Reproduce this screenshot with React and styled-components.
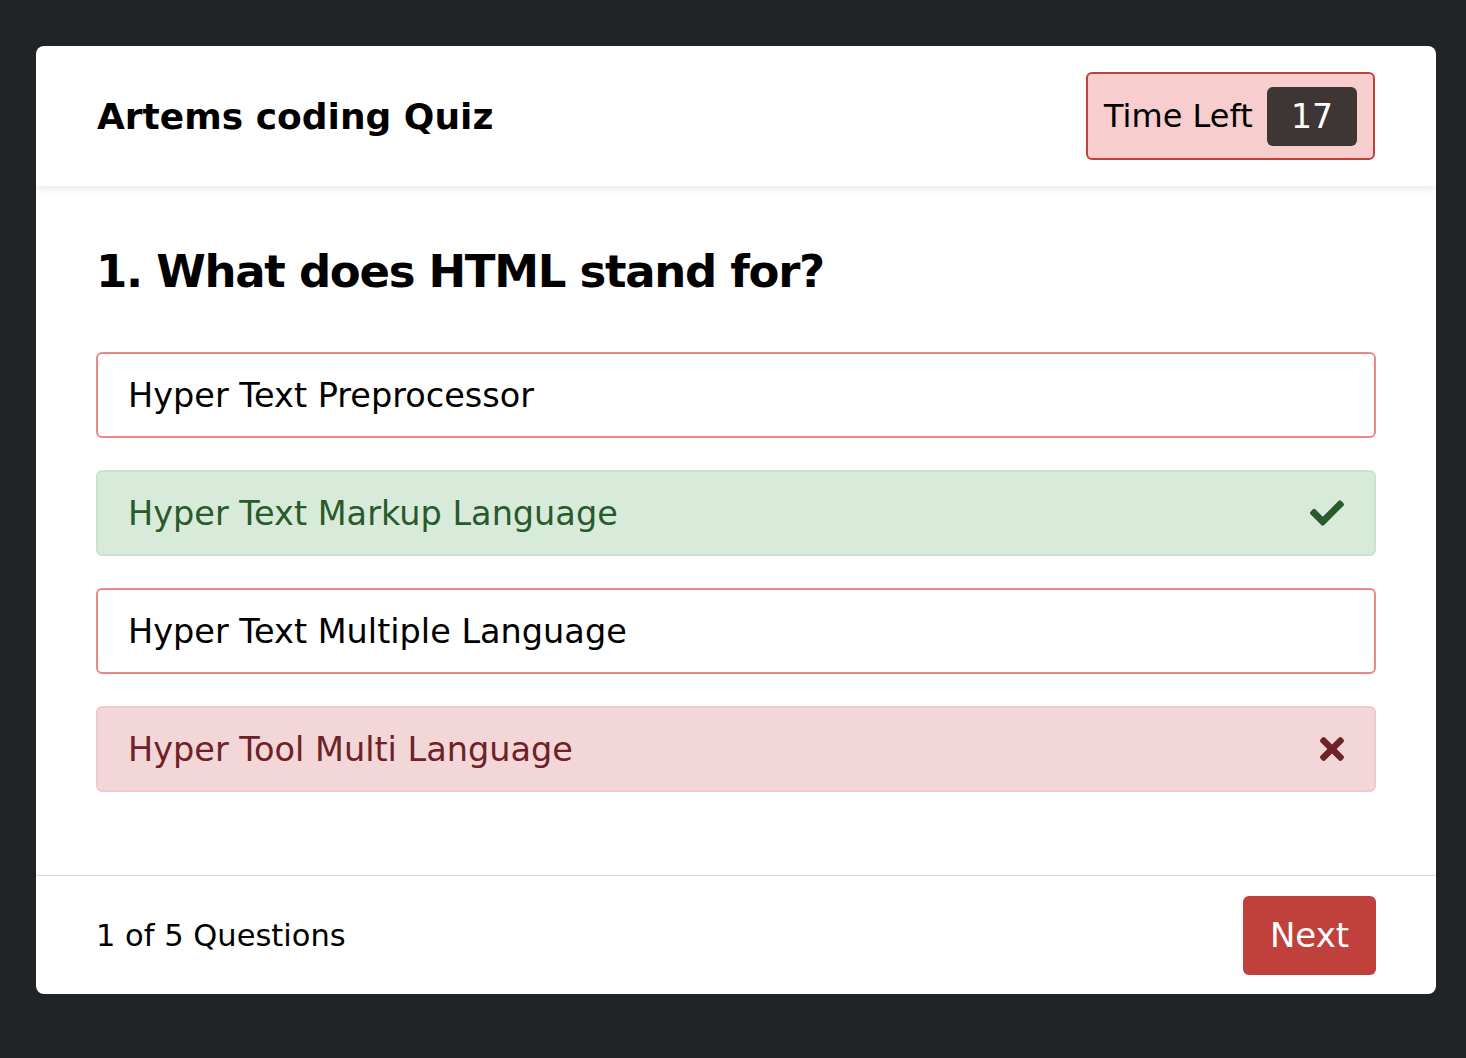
import styled, { createGlobalStyle } from 'styled-components'
import { FaCheck, FaTimes } from 'react-icons/fa'

const GlobalStyle = createGlobalStyle`
  * { box-sizing: border-box; }
  body {
    margin: 0;
    background: #212427;
    font-family: "DejaVu Sans", "Noto Sans", sans-serif;
  }
`;

const Page = styled.div`
  padding: 46px 30px 64px 36px;
`;

const Card = styled.div`
  background: #fff;
  border-radius: 8px;
  overflow: hidden;
`;

const Header = styled.header`
  height: 140px;
  padding: 0 61px;
  display: flex;
  align-items: center;
  justify-content: space-between;
  box-shadow: 0 4px 8px rgba(0, 0, 0, 0.08);
  position: relative;
`;

const Title = styled.h1`
  margin: 0;
  font-size: 36px;
  font-weight: 700;
  color: #000;
`;

const Timer = styled.div`
  height: 88px;
  width: 289px;
  display: flex;
  align-items: center;
  justify-content: space-between;
  padding: 0 16px 0 16px;
  background: #f7cdcd;
  border: 2px solid #c0413b;
  border-radius: 6px;
  font-size: 32px;
  color: #000;
`;

const TimerValue = styled.span`
  width: 90px;
  height: 59px;
  display: flex;
  align-items: center;
  justify-content: center;
  background: #3e3535;
  color: #fff;
  border-radius: 6px;
  font-size: 33px;
`;

const Body = styled.main`
  padding: 56px 60px 83px;
`;

const Question = styled.h2`
  margin: 0 0 50px;
  font-size: 45px;
  font-weight: 700;
  letter-spacing: -1.3px;
  line-height: 60px;
  color: #000;
`;

const Options = styled.div`
  display: flex;
  flex-direction: column;
  gap: 32px;
`;

const variants = {
  idle: { bg: '#fff', border: '#ee8886', color: '#000' },
  correct: { bg: '#d8ebdb', border: '#c9e4cd', color: '#295a2c' },
  wrong: { bg: '#f2d6d8', border: '#f0c9cc', color: '#6e2126' },
};

const Option = styled.button`
  height: 86px;
  width: 100%;
  display: flex;
  align-items: center;
  justify-content: space-between;
  padding: 0 30px 0 30px;
  background: ${({ $state }) => variants[$state].bg};
  border: 2px solid ${({ $state }) => variants[$state].border};
  color: ${({ $state }) => variants[$state].color};
  border-radius: 6px;
  font-family: inherit;
  font-size: 33.5px;
  text-align: left;
  cursor: pointer;
`;

const CheckIcon = styled(FaCheck)`
  width: 34px;
  height: 34px;
`;

const CrossIcon = styled(FaTimes)`
  width: 24px;
  height: 36px;
`;

const Footer = styled.footer`
  border-top: 1px solid #d6d6d6;
  height: 119px;
  padding: 0 60px 0 60px;
  display: flex;
  align-items: center;
  justify-content: space-between;
`;

const Count = styled.span`
  font-size: 30.5px;
  color: #000;
`;

const NextButton = styled.button`
  width: 133px;
  height: 79px;
  background: #c0413b;
  color: #fff;
  border: none;
  border-radius: 6px;
  font-family: inherit;
  font-size: 34px;
  cursor: pointer;
`;

const answers = [
  { id: 1, text: 'Hyper Text Preprocessor', state: 'idle' },
  { id: 2, text: 'Hyper Text Markup Language', state: 'correct' },
  { id: 3, text: 'Hyper Text Multiple Language', state: 'idle' },
  { id: 4, text: 'Hyper Tool Multi Language', state: 'wrong' },
];

function App() {
  return (
    <Page>
      <GlobalStyle />
      <Card>
        <Header>
          <Title>Artems coding Quiz</Title>
          <Timer>
            Time Left
            <TimerValue>17</TimerValue>
          </Timer>
        </Header>
        <Body>
          <Question>1. What does HTML stand for?</Question>
          <Options>
            {answers.map((a) => (
              <Option key={a.id} $state={a.state}>
                <span>{a.text}</span>
                {a.state === 'correct' && <CheckIcon />}
                {a.state === 'wrong' && <CrossIcon />}
              </Option>
            ))}
          </Options>
        </Body>
        <Footer>
          <Count>1 of 5 Questions</Count>
          <NextButton>Next</NextButton>
        </Footer>
      </Card>
    </Page>
  )
}

export default App;
